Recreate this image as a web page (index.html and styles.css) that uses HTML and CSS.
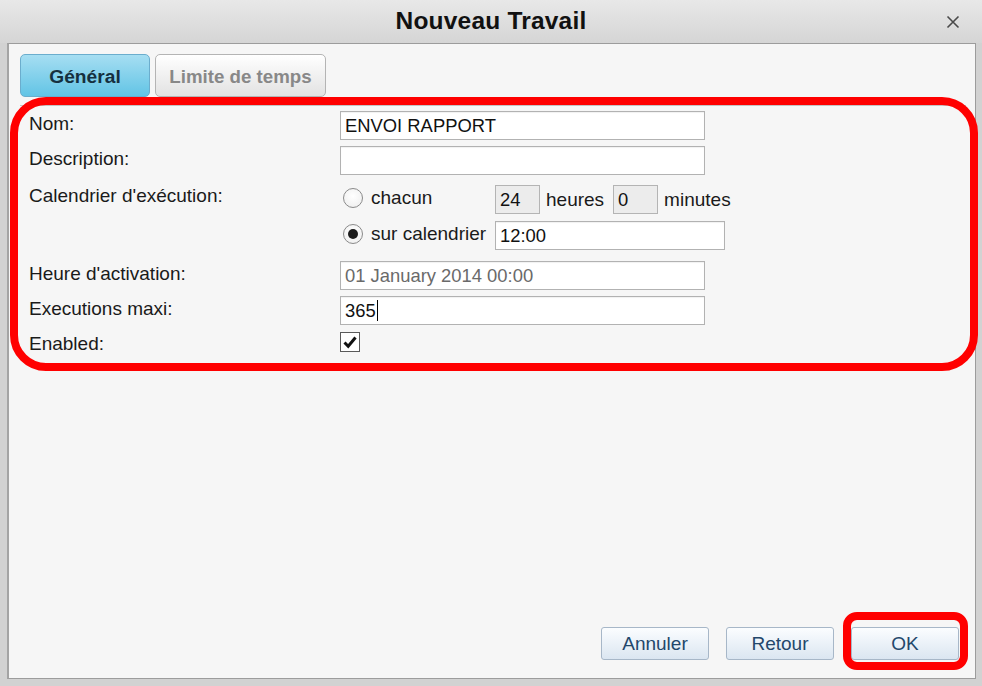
FILE: index.html
```html
<!DOCTYPE html>
<html lang="fr">
<head>
<meta charset="utf-8">
<title>Nouveau Travail</title>
<link rel="stylesheet" href="styles.css">
</head>
<body>
<div class="window">
  <div class="titlebar">
    <span></span>
    <h1 class="title">Nouveau Travail</h1>
    <span class="close"><svg width="14" height="14" viewBox="0 0 14 14"><path d="M1.5 1.5 L12.5 12.5 M12.5 1.5 L1.5 12.5" stroke="#4a4a4a" stroke-width="1.6" fill="none"/></svg></span>
  </div>
  <div class="panel">
    <div class="tabbar">
      <div class="tab tab-active">Général</div>
      <div class="tab tab-idle">Limite de temps</div>
    </div>
    <div class="form">
      <div class="label">Nom:</div>
      <div class="ctrl"><div class="field">ENVOI RAPPORT</div></div>

      <div class="label">Description:</div>
      <div class="ctrl"><div class="field"></div></div>

      <div class="label label-cal">Calendrier d'exécution:</div>
      <div class="ctrl cal">
        <div class="cal-row">
          <div class="opt"><span class="radio"></span><span>chacun</span></div>
          <div class="small">24</div>
          <span class="unit">heures</span>
          <div class="small small-min">0</div>
          <span class="unit">minutes</span>
        </div>
        <div class="cal-row">
          <div class="opt"><span class="radio radio-on"></span><span>sur calendrier</span></div>
          <div class="field field-time">12:00</div>
        </div>
      </div>

      <div class="label">Heure d'activation:</div>
      <div class="ctrl"><div class="field field-dim">01 January 2014 00:00</div></div>

      <div class="label">Executions maxi:</div>
      <div class="ctrl"><div class="field">365<span class="caret"></span></div></div>

      <div class="label">Enabled:</div>
      <div class="ctrl"><span class="check"><svg width="18" height="18" viewBox="0 0 18 18"><path d="M3.5 9.5 L7.2 13.2 L14.5 4.5" stroke="#111" stroke-width="3" fill="none" stroke-linejoin="miter"/></svg></span></div>
    </div>
    <div class="buttons">
      <button class="btn">Annuler</button>
      <button class="btn">Retour</button>
      <button class="btn">OK</button>
    </div>
  </div>
  <div class="hl hl-form"></div>
  <div class="hl hl-ok"></div>
</div>
</body>
</html>
```
FILE: styles.css
```css
html, body {
  margin: 0;
  padding: 0;
}
body {
  font-family: "Liberation Sans", Arial, sans-serif;
  background: #d3d3d3;
}
.window {
  position: relative;
  width: 982px;
  height: 686px;
  background: #d2d2d2;
  display: flex;
  flex-direction: column;
  box-sizing: border-box;
}
.titlebar {
  height: 43px;
  flex: none;
  display: grid;
  grid-template-columns: 1fr auto 1fr;
  align-items: center;
  background: linear-gradient(#e8e8e8, #d5d5d5);
}
.title {
  margin: 0 0 2px 0;
  font-size: 24.5px;
  font-weight: bold;
  color: #111;
  letter-spacing: 0.2px;
}
.close {
  justify-self: end;
  margin-right: 22px;
  display: flex;
  margin-top: 1px;
}
.panel {
  flex: 1;
  margin: 0 6px 7px 7px;
  border: 1px solid #9c9c9c;
  border-left: 2px solid #a4a4a4;
  background: #f6f6f6;
  display: flex;
  flex-direction: column;
}
.tabbar {
  display: flex;
  gap: 5px;
  padding: 10px 0 8px 0;
  margin: 0 9px 0 11px;
  border-bottom: 1px solid #c4c4c4;
}
.tab {
  height: 43px;
  box-sizing: border-box;
  border-radius: 5px;
  font-size: 18.7px;
  font-weight: bold;
  display: flex;
  align-items: center;
  justify-content: center;
  padding-top: 2px;
}
.tab-active {
  width: 130px;
  background: linear-gradient(#a6def2, #62c4e5);
  border: 1px solid #6badcd;
  color: #15303f;
  font-size: 19.2px;
}
.tab-idle {
  width: 171px;
  background: linear-gradient(#ffffff, #e2e2e2);
  border: 1px solid #b4b4b4;
  color: #888;
}
.form {
  display: grid;
  grid-template-columns: 311px 1fr;
  row-gap: 6px;
  padding: 5px 0 0 20px;
  font-size: 19px;
  color: #1a1a1a;
}
.label {
  padding-top: 3px;
  line-height: 20px;
}
.label-cal {
  padding-top: 5px;
}
.ctrl {
  display: flex;
  align-items: flex-start;
}
.field {
  width: 365px;
  height: 29px;
  box-sizing: border-box;
  border: 1px solid #b2b2b2;
  background: #fff;
  padding: 0 4px;
  display: flex;
  align-items: center;
  font-size: 18.4px;
  color: #111;
  box-shadow: inset 0 1px 1px rgba(0,0,0,0.06);
}
.field-dim {
  color: #6a6a6a;
}
.field-time {
  width: 230px;
}
.caret {
  display: inline-block;
  width: 1px;
  height: 21px;
  background: #000;
  margin-left: 1px;
}
.cal {
  flex-direction: column;
  gap: 7px;
  margin: 4px 0 5px 0;
}
.cal-row {
  display: flex;
  align-items: center;
  height: 29px;
}
.opt {
  width: 155px;
  display: flex;
  align-items: center;
  gap: 8px;
  padding-left: 3px;
  box-sizing: border-box;
  margin-top: -3px;
}
.radio {
  width: 20px;
  height: 20px;
  box-sizing: border-box;
  border-radius: 50%;
  border: 1px solid #8a8a8a;
  background: radial-gradient(circle at 50% 40%, #ffffff, #ececec);
  display: flex;
  align-items: center;
  justify-content: center;
  flex: none;
}
.radio-on::after {
  content: "";
  width: 10px;
  height: 10px;
  border-radius: 50%;
  background: #1c1c1c;
}
.small {
  width: 45px;
  height: 29px;
  box-sizing: border-box;
  border: 1px solid #b4b4b4;
  background: #ececec;
  padding: 0 4px;
  display: flex;
  align-items: center;
  color: #111;
  font-size: 18.4px;
}
.unit {
  margin-left: 6px;
}
.small-min {
  margin-left: 9px;
}
.check {
  width: 20px;
  height: 20px;
  box-sizing: border-box;
  border: 1px solid #5a5a5a;
  background: #fff;
  margin-top: 1px;
  display: flex;
  align-items: center;
  justify-content: center;
}
.buttons {
  margin-top: auto;
  display: flex;
  justify-content: flex-end;
  gap: 17px;
  padding: 0 16px 18px 0;
}
.btn {
  width: 108px;
  height: 33px;
  border: 1px solid #a7b7c8;
  border-radius: 3px;
  background: linear-gradient(#fbfdff, #dbe6f1);
  font-family: "Liberation Sans", Arial, sans-serif;
  font-size: 19px;
  color: #23476b;
  padding: 0;
}
.hl {
  position: absolute;
  box-sizing: border-box;
  border: 8px solid #ff0000;
  pointer-events: none;
}
.hl-form {
  left: 10px;
  top: 97px;
  width: 968px;
  height: 274px;
  border-radius: 36px;
}
.hl-ok {
  left: 843px;
  top: 612px;
  width: 125px;
  height: 58px;
  border-radius: 14px;
}
```
